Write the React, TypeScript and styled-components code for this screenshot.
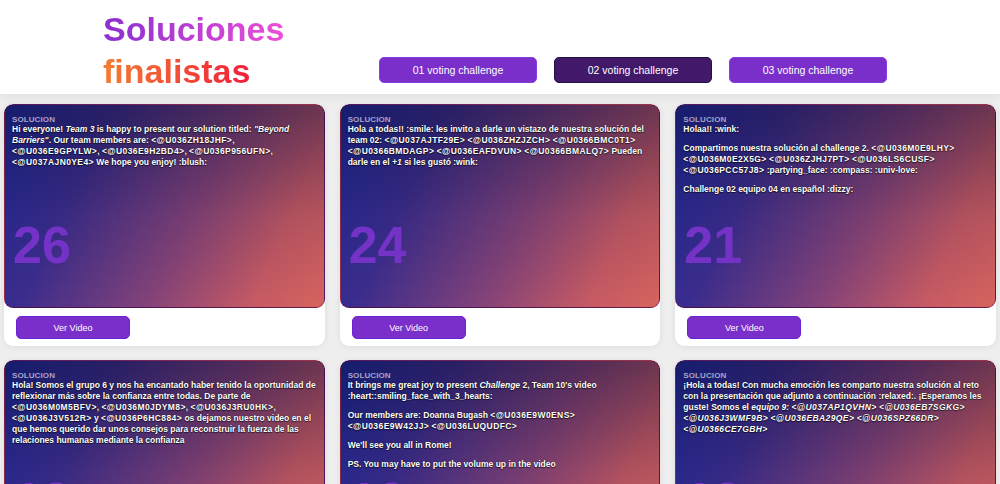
import React from "react";
import styled, { createGlobalStyle } from "styled-components";

const Global = createGlobalStyle`
  html, body { margin: 0; padding: 0; }
  body {
    background: #eeeeee;
    font-family: "Liberation Sans", Arial, Helvetica, sans-serif;
    -webkit-font-smoothing: antialiased;
  }
  * { box-sizing: border-box; }
`;

const Page = styled.div`
  width: 1000px;
  min-height: 484px;
  background: #eeeeee;
`;

const Header = styled.header`
  display: flex;
  align-items: flex-end;
  background: #ffffff;
  padding: 8px 0 2px 103px;
  box-shadow: 0 3px 8px rgba(0, 0, 0, 0.06);
`;

const Title = styled.h1`
  margin: 0;
  width: 276px;
  flex-shrink: 0;
  font-family: "Liberation Sans", Arial, sans-serif;
  font-size: 34px;
  line-height: 42px;
  font-weight: 700;
  letter-spacing: 0;
`;

const TitleLine = styled.span<{ $from: string; $to: string }>`
  display: block;
  width: max-content;
  background: linear-gradient(90deg, ${(p) => p.$from}, ${(p) => p.$to});
  -webkit-background-clip: text;
  background-clip: text;
  color: transparent;
`;

const Tabs = styled.nav`
  display: flex;
  gap: 17px;
  margin-bottom: 9px;
`;

const Tab = styled.button<{ $active?: boolean }>`
  width: 158px;
  height: 26px;
  border-radius: 5px;
  border: 1px solid ${(p) => (p.$active ? "#1d1240" : "#8a3ee0")};
  background: ${(p) => (p.$active ? "#42196a" : "#7a2fca")};
  color: #ffffff;
  font-family: "Liberation Sans", Arial, sans-serif;
  font-size: 10.5px;
  padding: 0;
  cursor: pointer;
`;

const Grid = styled.main`
  display: grid;
  grid-template-columns: repeat(3, 1fr);
  column-gap: 15px;
  row-gap: 14px;
  padding: 10px 4px 0 4px;
`;

const Card = styled.article`
  background: #ffffff;
  border-radius: 9px;
  box-shadow: 0 1px 6px rgba(0, 0, 0, 0.08);
  overflow: hidden;
`;

const Panel = styled.div`
  display: grid;
  height: 204px;
  padding: 10px 7px 0 7px;
  border-radius: 9px;
  border: 1px solid rgba(110, 10, 60, 0.55);
  background:
    linear-gradient(180deg, rgba(14, 12, 50, 0.45) 0%, rgba(14, 12, 50, 0.12) 55%, rgba(14, 12, 50, 0) 100%),
    linear-gradient(115deg, #1e2a9e 0%, #3c2d8e 26%, #874478 58%, #c65a64 82%, #d8645e 100%);
  overflow: hidden;
`;

const Content = styled.div`
  grid-area: 1 / 1;
  z-index: 1;
`;

const Label = styled.div`
  font-size: 8px;
  line-height: 9px;
  font-weight: 700;
  color: #a9a3c8;
  letter-spacing: 0.1px;
`;

const Body = styled.div`
  color: #ffffff;
  font-size: 8.5px;
  line-height: 11px;
  font-weight: 700;
  text-shadow: 0 0 1px rgba(0, 0, 0, 0.9), 0 1px 1px rgba(0, 0, 0, 0.6);

  p {
    margin: 0 0 8px 0;
  }
  p:last-child {
    margin-bottom: 0;
  }
  em {
    font-style: italic;
  }
`;

const Mention = styled.span`
  letter-spacing: 0.4px;
`;

const BigNumber = styled.div`
  grid-area: 1 / 1;
  align-self: start;
  margin-top: 104px;
  padding-left: 1px;
  font-size: 52px;
  line-height: 52px;
  font-weight: 700;
  color: #7433c6;
`;

const Footer = styled.div`
  padding: 8px 12px 7px 12px;
`;

const VideoButton = styled.button`
  width: 114px;
  height: 23px;
  border-radius: 5px;
  border: 1px solid #6a24d6;
  background: #7a2fca;
  color: #ffffff;
  font-family: "Liberation Sans", Arial, sans-serif;
  font-size: 9px;
  padding: 0;
  cursor: pointer;
`;

function rich(text: string): React.ReactNode[] {
  return text.split(/(<@[A-Z0-9]+>)/).map((part, i) =>
    part.startsWith("<@") ? <Mention key={i}>{part}</Mention> : <React.Fragment key={i}>{part}</React.Fragment>
  );
}

type Item = { n: string; body: React.ReactNode };

const items: Item[] = [
  {
    n: "26",
    body: (
      <p>
        Hi everyone! <em>Team 3</em> is happy to present our solution titled: <em>"Beyond Barriers"</em>.
        {rich(
          " Our team members are: <@U036ZH18JHF>, <@U036E9GPYLW>, <@U036E9H2BD4>, <@U036P956UFN>, <@U037AJN0YE4> We hope you enjoy! :blush:"
        )}
      </p>
    ),
  },
  {
    n: "24",
    body: (
      <p>
        {rich(
          "Hola a todas!! :smile: les invito a darle un vistazo de nuestra solución del team 02: <@U037AJTF29E> <@U036ZHZJZCH> <@U0366BMC0T1> <@U0366BMDAGP> <@U036EAFDVUN> <@U0366BMALQ7> Pueden darle en el "
        )}
        <em>+1</em> si les gustó :wink:
      </p>
    ),
  },
  {
    n: "21",
    body: (
      <>
        <p>Holaa!! :wink:</p>
        <p>
          {rich(
            "Compartimos nuestra solución al challenge 2. <@U036M0E9LHY> <@U036M0E2X5G> <@U036ZJHJ7PT> <@U036LS6CUSF> <@U036PCC57J8> :partying_face: :compass: :univ-love:"
          )}
        </p>
        <p>Challenge 02 equipo 04 en español :dizzy:</p>
      </>
    ),
  },
  {
    n: "19",
    body: (
      <p>
        {rich(
          "Hola! Somos el grupo 6 y nos ha encantado haber tenido la oportunidad de reflexionar más sobre la confianza entre todas. De parte de <@U036M0M5BFV>, <@U036M0JDYM8>, <@U036J3RU0HK>, <@U036J3V512R> y <@U036P6HC884> os dejamos nuestro video en el que hemos querido dar unos consejos para reconstruir la fuerza de las relaciones humanas mediante la confianza"
        )}
      </p>
    ),
  },
  {
    n: "19",
    body: (
      <>
        <p>
          It brings me great joy to present <em>Challenge</em> 2, Team 10's video :heart::smiling_face_with_3_hearts:
        </p>
        <p>{rich("Our members are: Doanna Bugash <@U036E9W0ENS> <@U036E9W42JJ> <@U036LUQUDFC>")}</p>
        <p>We'll see you all in Rome!</p>
        <p>PS. You may have to put the volume up in the video</p>
      </>
    ),
  },
  {
    n: "18",
    body: (
      <p>
        ¡Hola a todas! Con mucha emoción les comparto nuestra solución al reto con la presentación que adjunto a
        continuación :relaxed:. ¡Esperamos les guste! Somos el{" "}
        <em>
          {rich(
            "equipo 9: <@U037AP1QVHN> <@U036EB7SGKG> <@U036J3WMF9B> <@U036EBA29QE> <@U036SPZ66DR> <@U0366CE7GBH>"
          )}
        </em>
      </p>
    ),
  },
];

export default function App() {
  return (
    <Page>
      <Global />
      <Header>
        <Title>
          <TitleLine $from="#8b2fcf" $to="#ec4fd6">
            Soluciones
          </TitleLine>
          <TitleLine $from="#f47c33" $to="#f0203c">
            finalistas
          </TitleLine>
        </Title>
        <Tabs>
          <Tab>01 voting challenge</Tab>
          <Tab $active>02 voting challenge</Tab>
          <Tab>03 voting challenge</Tab>
        </Tabs>
      </Header>
      <Grid>
        {items.map((it, i) => (
          <Card key={i}>
            <Panel>
              <Content>
                <Label>SOLUCION</Label>
                <Body>{it.body}</Body>
              </Content>
              <BigNumber>{it.n}</BigNumber>
            </Panel>
            <Footer>
              <VideoButton>Ver Video</VideoButton>
            </Footer>
          </Card>
        ))}
      </Grid>
    </Page>
  );
}
